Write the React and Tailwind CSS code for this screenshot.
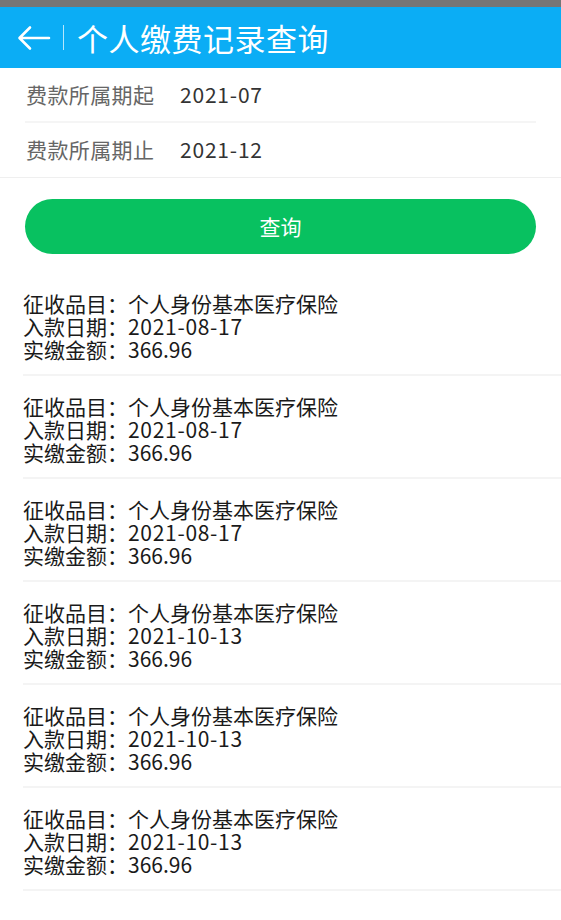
import React from 'react';

const records = [
  { date: '2021-08-17' },
  { date: '2021-08-17' },
  { date: '2021-08-17' },
  { date: '2021-10-13' },
  { date: '2021-10-13' },
  { date: '2021-10-13' },
];

export default function App() {
  return (
    <div
      className="w-[561px] h-[920px] overflow-hidden bg-white"
      style={{ fontFamily: '"Noto Sans CJK SC", "Noto Sans", sans-serif' }}
    >
      {/* status strip */}
      <div className="h-[7px] bg-[#767676]" />

      {/* header */}
      <div className="h-[61px] bg-[#0badf5] flex items-center">
        <svg width="34" height="26" viewBox="0 0 34 26" className="ml-[17px]">
          <path
            d="M32 13H3M13 2.5L2.5 13L13 23.5"
            fill="none"
            stroke="#fff"
            strokeWidth="2.6"
            strokeLinecap="round"
            strokeLinejoin="round"
          />
        </svg>
        <div className="ml-[12px] w-px h-[25px] bg-white/70" />
        <span className="ml-[13px] text-[31px] tracking-[0.5px] leading-none text-white whitespace-nowrap">个人缴费记录查询</span>
      </div>

      {/* form */}
      <div className="border-b border-[#efefef]">
        <div className="mx-[25px] h-[55px] flex items-center border-b-2 border-[#f5f5f5]">
          <span className="w-[155px] shrink-0 pl-[1px] text-[21px] tracking-[0.4px] text-[#666] whitespace-nowrap">费款所属期起</span>
          <span className="text-[21px] tracking-[0.8px] text-[#333]">2021-07</span>
        </div>
        <div className="mx-[25px] h-[54px] flex items-center">
          <span className="w-[155px] shrink-0 pl-[1px] text-[21px] tracking-[0.4px] text-[#666] whitespace-nowrap">费款所属期止</span>
          <span className="text-[21px] tracking-[0.8px] text-[#333]">2021-12</span>
        </div>
      </div>

      <div className="px-[25px] pt-[21px]">
        <button className="w-full h-[55px] rounded-full bg-[#08c160] text-white text-[21px] flex items-center justify-center">
          查询
        </button>
      </div>

      {/* records */}
      <div className="mt-[19px] pl-[23px]">
        {records.map((r, i) => (
          <div
            key={i}
            className="pt-[19px] pb-[13px] border-b-2 border-[#f4f4f4] text-[21px] leading-[23px] text-[#1a1a1a]"
          >
            <div>征收品目：个人身份基本医疗保险</div>
            <div>
              入款日期：<span className="tracking-[0.7px]">{r.date}</span>
            </div>
            <div>实缴金额：366.96</div>
          </div>
        ))}
      </div>
    </div>
  );
}
